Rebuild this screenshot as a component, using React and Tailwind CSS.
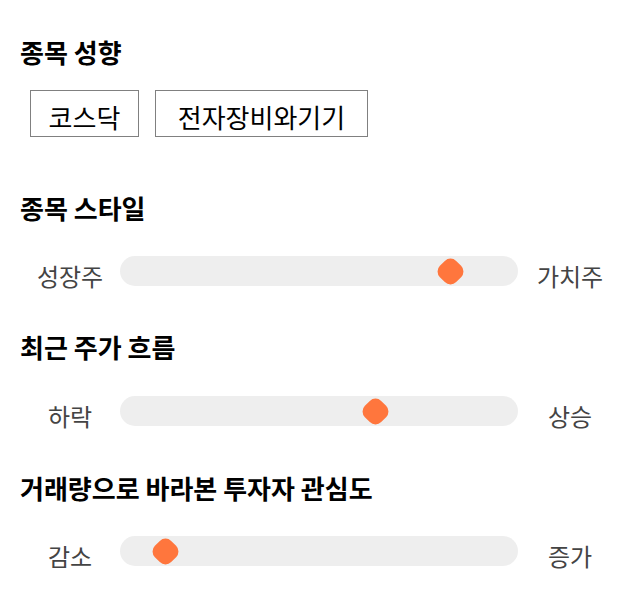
import React from "react";

const font = { fontFamily: '"Noto Sans CJK KR", "Noto Sans", sans-serif' };

function Heading({ children, className = "" }) {
  return (
    <h2 className={`h-8 leading-8 text-[26px] font-bold text-black ${className}`}>{children}</h2>
  );
}

function Slider({ left, right, pos, className = "" }) {
  return (
    <div className={`flex items-center h-[30px] ${className}`}>
      <div className="w-[100px] pt-[10px] text-center text-[24px] leading-[30px] text-[#444]">{left}</div>
      <div className="relative w-[398px] h-[30px] rounded-full bg-[#eeeeee]">
        <div
          className="absolute top-0 w-[30px] h-[30px] flex items-center justify-center"
          style={{ left: pos }}
        >
          <div className="w-[23px] h-[23px] rotate-45 rounded-[8px] bg-[#ff763d]" />
        </div>
      </div>
      <div className="w-[104px] pt-[10px] text-center text-[24px] leading-[30px] text-[#444]">{right}</div>
    </div>
  );
}

export default function App() {
  return (
    <div className="w-[640px] h-[606px] bg-white pl-5 pt-9" style={font}>
      <Heading>종목 성향</Heading>
      <div className="flex gap-4 ml-[10px] mt-[22px]">
        <div className="h-[47px] w-[109px] border border-[#808080] flex items-center justify-center pt-[6px] text-[26px] text-black">코스닥</div>
        <div className="h-[47px] w-[213px] border border-[#808080] flex items-center justify-center pt-[6px] text-[26px] text-black">전자장비와기기</div>
      </div>
      <Heading className="mt-[55px]">종목 스타일</Heading>
      <Slider className="mt-8" left="성장주" right="가치주" pos={315} />
      <Heading className="mt-[45px]">최근 주가 흐름</Heading>
      <Slider className="mt-[33px]" left="하락" right="상승" pos={240} />
      <Heading className="mt-[46px]">거래량으로 바라본 투자자 관심도</Heading>
      <Slider className="mt-8" left="감소" right="증가" pos={30} />
    </div>
  );
}
